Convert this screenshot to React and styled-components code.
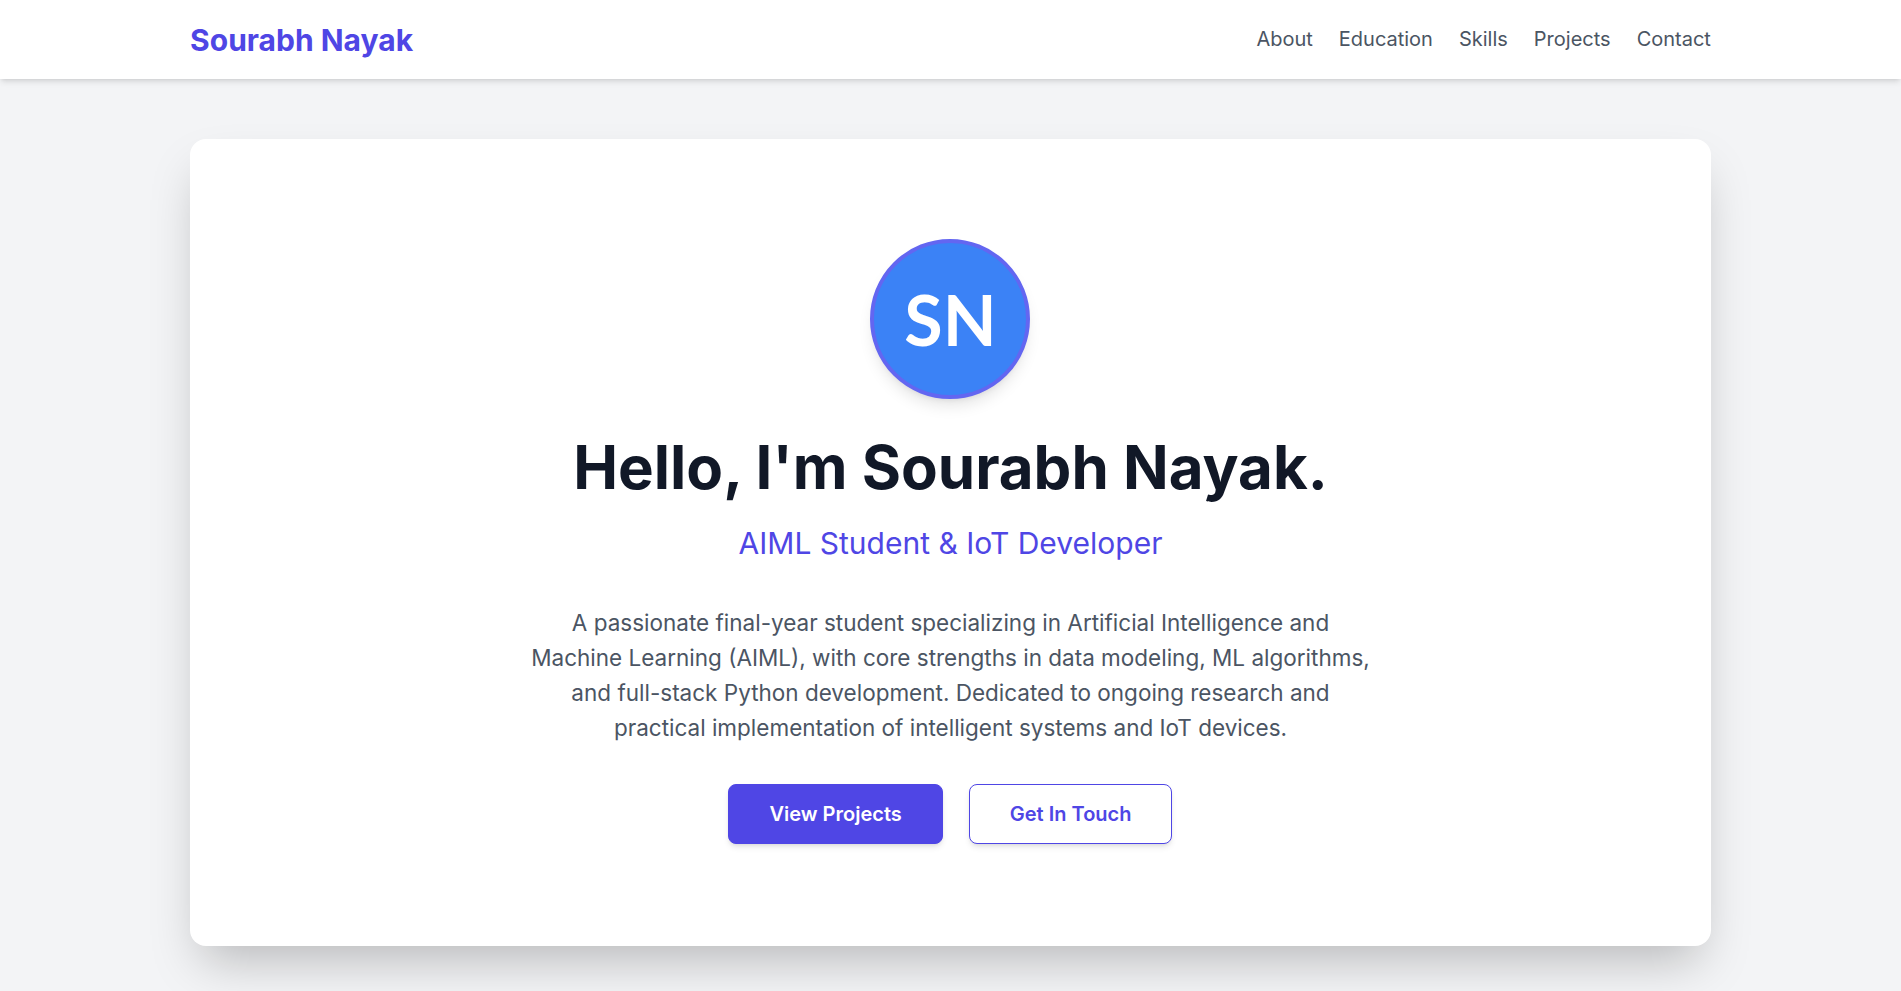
import React from "react";
import styled, { createGlobalStyle } from "styled-components";

const Global = createGlobalStyle`
  * { box-sizing: border-box; }
  html, body { margin: 0; padding: 0; }
  body {
    background: #f3f4f6;
    font-family: Inter, "Noto Sans", Arial, sans-serif;
    -webkit-font-smoothing: antialiased;
  }
`;

const Header = styled.header`
  background: #ffffff;
  height: 79px;
  box-shadow: 0 4px 6px -1px rgba(0,0,0,0.1), 0 2px 4px -2px rgba(0,0,0,0.1);
  position: relative;
  z-index: 2;
`;

const Container = styled.div`
  width: 80%;
  margin: 0 auto;
`;

const HeaderInner = styled(Container)`
  height: 100%;
  display: flex;
  align-items: center;
  justify-content: space-between;
`;

const Logo = styled.a`
  font-size: 30px;
  font-weight: 700;
  color: #4f46e5;
  text-decoration: none;
`;

const Nav = styled.nav`
  display: flex;
  gap: 26px;
  margin-bottom: 2px;
`;

const NavLink = styled.a`
  font-size: 20px;
  color: #4b5563;
  text-decoration: none;
`;

const Main = styled(Container)`
  padding-top: 60px;
  padding-bottom: 60px;
`;

const Card = styled.section`
  background: #ffffff;
  border-radius: 16px;
  box-shadow: 0 25px 50px -12px rgba(0,0,0,0.25);
  padding: 100px 40px 102px;
  display: flex;
  flex-direction: column;
  align-items: center;
  text-align: center;
`;

const Avatar = styled.div`
  width: 160px;
  height: 160px;
  border-radius: 50%;
  background: #3b82f6;
  border: 4px solid #6366f1;
  box-shadow: 0 10px 15px -3px rgba(0,0,0,0.1), 0 4px 6px -4px rgba(0,0,0,0.1);
  display: flex;
  align-items: center;
  justify-content: center;
  color: #ffffff;
  font-family: Lato, "Open Sans", sans-serif;
  font-size: 70px;
  font-weight: 700;
`;

const Title = styled.h1`
  margin: 34px 0 0;
  font-size: 60px;
  line-height: 1.15;
  font-weight: 700;
  color: #111827;
`;

const Subtitle = styled.p`
  margin: 22px 0 0;
  font-size: 30px;
  line-height: 1.3;
  color: #4f46e5;
`;

const Lead = styled.p`
  margin: 42px 0 0;
  max-width: 900px;
  font-size: 22.5px;
  line-height: 35px;
  color: #4b5563;
`;

const Actions = styled.div`
  display: flex;
  gap: 26px;
  margin-top: 39px;
`;

const Button = styled.a`
  display: inline-flex;
  align-items: center;
  justify-content: center;
  height: 60px;
  padding: 0 40px;
  border-radius: 8px;
  font-size: 20px;
  font-weight: 600;
  text-decoration: none;
  border: 1px solid #4f46e5;
  background: ${(p) => (p.$outline ? "#ffffff" : "#4f46e5")};
  color: ${(p) => (p.$outline ? "#4f46e5" : "#ffffff")};
  box-shadow: 0 4px 6px -1px rgba(0,0,0,0.1), 0 2px 4px -2px rgba(0,0,0,0.1);
`;

export default function App() {
  return (
    <>
      <Global />
      <Header>
        <HeaderInner>
          <Logo href="#">Sourabh Nayak</Logo>
          <Nav>
            <NavLink href="#about">About</NavLink>
            <NavLink href="#education">Education</NavLink>
            <NavLink href="#skills">Skills</NavLink>
            <NavLink href="#projects">Projects</NavLink>
            <NavLink href="#contact">Contact</NavLink>
          </Nav>
        </HeaderInner>
      </Header>
      <Main>
        <Card>
          <Avatar>SN</Avatar>
          <Title>Hello, I'm Sourabh Nayak.</Title>
          <Subtitle>AIML Student &amp; IoT Developer</Subtitle>
          <Lead>
            A passionate final-year student specializing in Artificial Intelligence and<br />
            Machine Learning (AIML), with core strengths in data modeling, ML algorithms,<br />
            and full-stack Python development. Dedicated to ongoing research and<br />
            practical implementation of intelligent systems and IoT devices.
          </Lead>
          <Actions>
            <Button href="#projects">View Projects</Button>
            <Button href="#contact" $outline>Get In Touch</Button>
          </Actions>
        </Card>
      </Main>
    </>
  );
}
